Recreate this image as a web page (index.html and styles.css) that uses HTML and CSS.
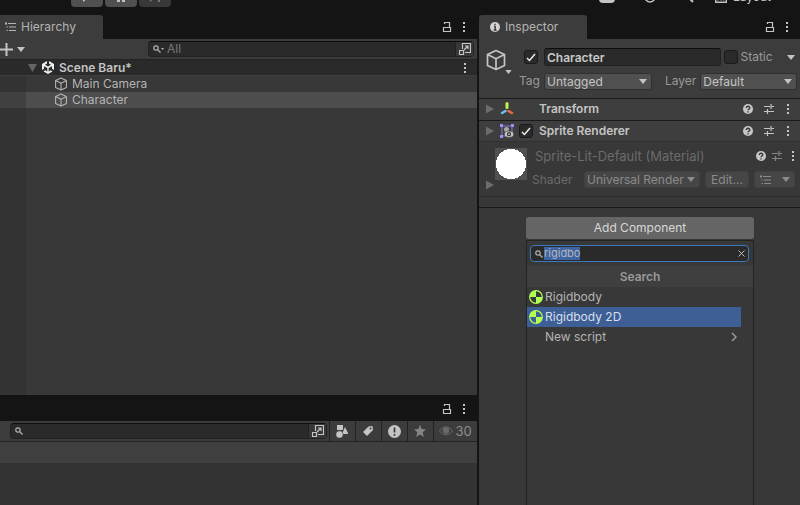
FILE: index.html
```html
<!DOCTYPE html>
<html lang="en">
<head>
<meta charset="utf-8">
<title>Scene Baru - Editor</title>
<link rel="stylesheet" href="styles.css">
</head>
<body>
<svg class="defs" aria-hidden="true">
  <symbol id="lock" viewBox="0 0 10 12"><path d="M1.500 6.500h7v4h-7z M2.500 3V1.500h5v5" fill="none" stroke="currentColor" stroke-width="1.200"/></symbol>
  <symbol id="dots" viewBox="0 0 4 12"><path d="M1 1h2v2H1zM1 5h2v2H1zM1 9h2v2H1z" fill="currentColor"/></symbol>
  <symbol id="down" viewBox="0 0 8 5"><path d="M0 0h8L4 5z" fill="currentColor"/></symbol>
  <symbol id="fold" viewBox="0 0 8 10"><path d="M0 .5v9L8 5z" fill="currentColor"/></symbol>
  <symbol id="list" viewBox="0 0 12 10"><path d="M3 1.500h8M4 5h7M4 8.500h7M0 1.500h2M1 0v3M1.500 5h1.300M1.500 8.500h1.300" fill="none" stroke="currentColor" stroke-width="1.100"/></symbol>
  <symbol id="mag" viewBox="0 0 8 8"><circle cx="3" cy="3" r="2.200" fill="none" stroke="currentColor" stroke-width="1.200"/><path d="M4.600 4.600L7.500 7.500" stroke="currentColor" stroke-width="1.300"/></symbol>
  <symbol id="pop" viewBox="0 0 12 12"><path d="M3.500 6V.5h8v9H6M.5 7.500h4v4h-4zM5 7l4-4M6 3h3v3" fill="none" stroke="currentColor" stroke-width="1.200"/></symbol>
  <symbol id="cube" viewBox="0 0 20 22"><path d="M10 1.500L18.500 5.500v11L10 20.500 1.500 16.500v-11zM1.500 5.500L10 9.800l8.500-4.300M10 9.800v10.700" fill="none" stroke="currentColor" stroke-width="1.700" stroke-linejoin="round"/></symbol>
  <symbol id="check" viewBox="0 0 10 9"><path d="M1 5l2.500 2.500L9 1" fill="none" stroke="#eee" stroke-width="1.500"/></symbol>
  <symbol id="help" viewBox="0 0 10 10"><circle cx="5" cy="5" r="5" fill="#c6c6c6"/><path d="M3.300 3.900c0-2.200 3.500-2.200 3.500 0C6.800 5.100 5 5 5 6.300M5 7.200v1.300" fill="none" stroke="#333" stroke-width="1.300"/></symbol>
  <symbol id="sliders" viewBox="0 0 10 10"><path d="M0 2.500h6M7 2.500h3M7 0v5M0 7.500h3M4 7.500h6M3.500 5v5" fill="none" stroke="currentColor" stroke-width="1.200"/></symbol>
  <symbol id="body" viewBox="0 0 14 14"><circle cx="7" cy="7" r="6.300" fill="none" stroke="#b0ff55" stroke-width="1.200"/><path d="M7 7V.7A6.300 6.300 0 0 0 .7 7zM7 7v6.300A6.300 6.300 0 0 0 13.300 7z" fill="#b0ff55"/></symbol>
</svg>

<header class="topbar">
  <div class="play">
    <button aria-label="Play"><svg width="10" height="12" viewBox="0 0 10 12"><path d="M1 0l8 6-8 6z" fill="currentColor"/></svg></button>
    <button aria-label="Pause"><svg width="8" height="12" viewBox="0 0 8 12"><path d="M0 0h3v12H0zM5 0h3v12H5z" fill="currentColor"/></svg></button>
    <button class="dim" aria-label="Step"><svg width="12" height="12" viewBox="0 0 12 12"><path d="M1 0l7 6-7 6zM9 0h2v12H9z" fill="currentColor"/></svg></button>
  </div>
  <div class="services">
    <svg width="16" height="12" viewBox="0 0 16 12"><path d="M4 4a4 4 0 0 1 8 0a4 4 0 0 1 0 8H4a4 4 0 0 1 0-8z" fill="currentColor"/></svg>
    <svg class="history" width="12" height="12" viewBox="0 0 12 12"><circle cx="6" cy="6" r="5" fill="none" stroke="currentColor" stroke-width="1.500"/></svg>
    <svg class="find" width="12" height="12" viewBox="0 0 12 12"><circle cx="4" cy="4" r="3" fill="none" stroke="currentColor" stroke-width="1.500"/><path d="M6 6l5 5" stroke="currentColor" stroke-width="2"/></svg>
    <svg width="12" height="12" viewBox="0 0 12 12"><path d="M.7.7h10.600v10.600H.7zM3 9.500V5M6 9.500V5M8.500 9.500V5" fill="none" stroke="currentColor" stroke-width="1.400"/></svg>
    <span>Layout</span>
  </div>
</header>

<main class="workspace">
  <div class="left">
    <section class="hierarchy">
      <div class="tabs">
        <div class="tab tab-hierarchy"><svg width="12" height="10"><use href="#list"/></svg>Hierarchy</div>
        <div class="tab-tools"><button aria-label="Lock"><svg width="10" height="12"><use href="#lock"/></svg></button><button aria-label="Menu"><svg width="4" height="12"><use href="#dots"/></svg></button></div>
      </div>
      <div class="toolbar">
        <button class="add" aria-label="Create"><svg width="13" height="13" viewBox="0 0 13 13"><path d="M6.500 0v13M0 6.500h13" stroke="currentColor" stroke-width="2"/></svg><svg width="8" height="5"><use href="#down"/></svg></button>
        <div class="search search-all">
          <svg width="8" height="8"><use href="#mag"/></svg><svg class="tiny" width="3" height="2" viewBox="0 0 8 5"><use href="#down"/></svg>
          <input type="text" aria-label="Search hierarchy" placeholder="All">
          <button class="pop" aria-label="Open search"><svg width="12" height="12"><use href="#pop"/></svg></button>
        </div>
      </div>
      <div class="scene">
        <svg class="arrow" width="9" height="8" viewBox="0 0 9 8"><path d="M0 0h9L4.500 8z" fill="currentColor"/></svg>
        <svg class="logo" width="12" height="13" viewBox="0 0 12 13"><path d="M5 0v2.500L3 3.700l3 1.700 3-1.700-2-1.200V0l5 3v6l-2-1.200V5.200L6.700 7v3.500l2-1.200L10.500 10.500 6 13 1.500 10.500l1.800-1.200 2 1.200V7L2 5.200v2.600L0 9V3z" fill="#eee"/></svg>
        <strong>Scene Baru*</strong>
        <button aria-label="Scene menu"><svg width="4" height="12"><use href="#dots"/></svg></button>
      </div>
      <ul class="tree">
        <li><svg width="14" height="14"><use href="#cube"/></svg>Main Camera</li>
        <li class="active"><svg width="14" height="14"><use href="#cube"/></svg>Character</li>
      </ul>
    </section>
    <section class="project">
      <div class="tabs">
        <div class="tab-tools"><button aria-label="Lock"><svg width="10" height="12"><use href="#lock"/></svg></button><button aria-label="Menu"><svg width="4" height="12"><use href="#dots"/></svg></button></div>
      </div>
      <div class="toolbar">
        <div class="search search-project">
          <svg width="8" height="8"><use href="#mag"/></svg>
          <input type="text" aria-label="Search project">
          <button class="pop" aria-label="Open search"><svg width="12" height="12"><use href="#pop"/></svg></button>
        </div>
        <button class="filter" aria-label="Filter by type"><svg width="12" height="13" viewBox="0 0 12 13"><path d="M1 0h6v5H1zM9 2l3.500 7H6z" fill="currentColor"/><circle cx="3.500" cy="9.500" r="3.700" fill="currentColor" stroke="#3c3c3c" stroke-width=".6"/></svg></button>
        <button class="filter" aria-label="Filter by label"><svg width="10" height="10" viewBox="0 0 10 10"><path d="M0 6L5.500.5 9.500 0 10 4 4 10z" fill="currentColor"/><circle cx="7.500" cy="2.500" r="1" fill="#3c3c3c"/></svg></button>
        <button class="filter" aria-label="Filter by log"><svg width="13" height="13" viewBox="0 0 13 13"><circle cx="6.500" cy="6.500" r="6.500" fill="currentColor"/><path d="M6.500 2.500v5M6.500 9v1.800" stroke="#333" stroke-width="1.600"/></svg></button>
        <button class="filter muted" aria-label="Favorites"><svg width="12" height="12" viewBox="0 0 12 12"><path d="M6 0l1.700 4.100L12 4.500 8.700 7.300 9.800 12 6 9.500 2.200 12l1.100-4.700L0 4.500l4.300-.4z" fill="currentColor"/></svg></button>
        <button class="filter count"><svg width="14" height="10" viewBox="0 0 14 10"><path d="M.5 5C4-.5 10-.5 13.500 5 10 10 4 10 .5 5z" fill="none" stroke="currentColor"/><circle cx="7" cy="4.500" r="3.200" fill="currentColor"/></svg>30</button>
      </div>
      <div class="crumbs"></div>
      <div class="assets"></div>
    </section>
  </div>

  <section class="inspector">
    <div class="tabs">
      <div class="tab tab-inspector"><svg width="10" height="10" viewBox="0 0 10 10"><circle cx="5" cy="5" r="5" fill="#d2d2d2"/><path d="M5 1.700v1.400M4 4.500h1.200V8M3.700 8h2.800" stroke="#333" stroke-width="1.300" fill="none"/></svg>Inspector</div>
      <div class="tab-tools"><button aria-label="Lock"><svg width="10" height="12"><use href="#lock"/></svg></button><button aria-label="Menu"><svg width="4" height="12"><use href="#dots"/></svg></button></div>
    </div>
    <div class="object">
      <button class="object-icon" aria-label="Object icon"><svg width="22" height="22"><use href="#cube"/></svg><svg class="corner" width="7" height="4" viewBox="0 0 8 5"><use href="#down"/></svg></button>
      <div class="object-fields">
        <div class="object-row">
          <label class="tick"><input type="checkbox" checked aria-label="Active"><svg width="10" height="9"><use href="#check"/></svg></label>
          <input class="name" type="text" aria-label="Name" value="Character">
          <label class="tick static"><input type="checkbox"><svg width="10" height="9"><use href="#check"/></svg><span>Static</span></label>
          <button class="more" aria-label="Static options"><svg width="8" height="5"><use href="#down"/></svg></button>
        </div>
        <div class="object-row tags">
          <label for="tag">Tag</label>
          <div class="drop tag"><select id="tag"><option>Untagged</option></select><svg width="8" height="5"><use href="#down"/></svg></div>
          <label class="layer" for="layer">Layer</label>
          <div class="drop"><select id="layer"><option>Default</option></select><svg width="8" height="5"><use href="#down"/></svg></div>
        </div>
      </div>
    </div>
    <div class="component">
      <svg class="fold" width="8" height="10"><use href="#fold"/></svg>
      <svg width="14" height="14" viewBox="0 0 14 14"><path d="M7 1.500v4" stroke="#bdf34b" stroke-width="3" stroke-linecap="round"/><path d="M5.500 9L2 11" stroke="#62c7f5" stroke-width="2.500" stroke-linecap="round"/><path d="M8.500 9L12 11" stroke="#f46743" stroke-width="2.500" stroke-linecap="round"/></svg>
      <span class="tick-space"></span>
      <strong>Transform</strong>
      <div class="component-tools"><button aria-label="Help"><svg width="10" height="10"><use href="#help"/></svg></button><button aria-label="Presets"><svg width="10" height="10"><use href="#sliders"/></svg></button><button aria-label="Menu"><svg width="4" height="12"><use href="#dots"/></svg></button></div>
    </div>
    <div class="component">
      <svg class="fold" width="8" height="10"><use href="#fold"/></svg>
      <svg width="14" height="14" viewBox="0 0 14 14"><path d="M2 2h10v10H2z" fill="none" stroke="#8d7ad8"/><path d="M0 0h3v3H0zM11 0h3v3h-3zM0 11h3v3H0z" fill="#a58cf5"/><circle cx="6.500" cy="5.500" r="2.500" fill="#aaa"/><ellipse cx="9" cy="10.200" rx="4.600" ry="3.200" fill="#c6c6c6" stroke="#3c3c3c" stroke-width=".6"/><circle cx="9" cy="10.200" r="1.500" fill="none" stroke="#333" stroke-width="1.200"/></svg>
      <label class="tick"><input type="checkbox" checked aria-label="Sprite Renderer enabled"><svg width="10" height="9"><use href="#check"/></svg></label>
      <strong>Sprite Renderer</strong>
      <div class="component-tools"><button aria-label="Help"><svg width="10" height="10"><use href="#help"/></svg></button><button aria-label="Presets"><svg width="10" height="10"><use href="#sliders"/></svg></button><button aria-label="Menu"><svg width="4" height="12"><use href="#dots"/></svg></button></div>
    </div>
    <div class="material">
      <svg class="fold" width="8" height="10"><use href="#fold"/></svg>
      <div class="preview"></div>
      <div class="material-main">
        <div class="material-title"><span>Sprite-Lit-Default (Material)</span>
          <div class="component-tools"><button aria-label="Help"><svg width="10" height="10"><use href="#help"/></svg></button><button class="muted" aria-label="Presets"><svg width="10" height="10"><use href="#sliders"/></svg></button><button aria-label="Menu"><svg width="4" height="12"><use href="#dots"/></svg></button></div>
        </div>
        <div class="shader">
          <label for="shader">Shader</label>
          <div class="drop"><select id="shader" disabled><option>Universal Render</option></select><svg width="8" height="5"><use href="#down"/></svg></div>
          <button disabled>Edit...</button>
          <button class="shader-list" disabled aria-label="Shader list"><svg width="12" height="10"><use href="#list"/></svg><svg width="8" height="5"><use href="#down"/></svg></button>
        </div>
      </div>
    </div>
    <div class="spacer"></div>
    <div class="picker">
      <button class="add-component">Add Component</button>
      <div class="popup">
        <div class="popup-search">
          <div class="field"><svg width="8" height="8"><use href="#mag"/></svg><div class="query" contenteditable="true" role="textbox" aria-label="Search components"><span>rigidbo</span></div><button aria-label="Clear"><svg width="7" height="7" viewBox="0 0 7 7"><path d="M.5.5l6 6M6.500.5l-6 6" stroke="currentColor"/></svg></button></div>
        </div>
        <h2>Search</h2>
        <ul>
          <li><svg width="14" height="14"><use href="#body"/></svg>Rigidbody</li>
          <li class="active"><svg width="14" height="14"><use href="#body"/></svg>Rigidbody 2D</li>
          <li><span class="no-icon"></span>New script<svg class="next" width="6" height="10" viewBox="0 0 6 10"><path d="M1 1l4 4-4 4" fill="none" stroke="#999" stroke-width="1.500"/></svg></li>
        </ul>
      </div>
    </div>
  </section>
</main>
</body>
</html>
```
FILE: styles.css
```css
* { box-sizing: border-box; }

body {
  margin: 0;
  height: 100vh;
  display: flex;
  flex-direction: column;
  overflow: hidden;
  background: #141414;
  color: #b4b4b4;
  font: 12px/16px Inter, "Liberation Sans", sans-serif;
}

button, input, select { font: inherit; color: inherit; }
button { display: flex; align-items: center; border: 0; padding: 0; background: none; color: #c4c4c4; }
input { border: 0; padding: 0; background: none; outline: none; }
ul { list-style: none; margin: 0; padding: 0; }
svg { display: block; flex: none; }
strong { font-weight: 600; color: #c4c4c4; }
.defs { position: absolute; width: 0; height: 0; }

/* Top bar, scrolled partly out of the window */
.topbar {
  height: 15px;
  flex: none;
  display: flex;
  justify-content: space-between;
  align-items: flex-end;
  padding: 0 29px 8px 71px;
}
.play { display: flex; gap: 2px; }
.play button {
  width: 32px;
  height: 22px;
  justify-content: center;
  background: #505050;
  color: #c4c4c4;
  border-radius: 0 0 4px 4px;
}
.play .dim { background: #383838; color: #777; }
.services { display: flex; align-items: center; padding-bottom: 2px; font-size: 12px; color: #c4c4c4; }
.services .history { margin-left: 29px; }
.services .find { margin: 0 21px 0 26px; }
.services span { margin-left: 6px; }

.workspace { flex: 1; min-height: 0; display: flex; gap: 2px; }
.left { flex: 477; min-width: 0; display: flex; flex-direction: column; }
.inspector { flex: 321; min-width: 0; background: #383838; display: flex; flex-direction: column; }

.tabs { height: 24px; flex: none; display: flex; justify-content: space-between; background: #141414; }
.tab { display: flex; align-items: center; background: #3c3c3c; border-radius: 0 3px 0 0; }
.tab-hierarchy { width: 103px; padding-left: 5px; gap: 4px; }
.tab-inspector { width: 108px; padding-left: 11px; gap: 5px; border-radius: 3px 3px 0 0; }
.tab-tools { display: flex; align-items: center; gap: 10px; margin-left: auto; padding-right: 11px; }

.toolbar { height: 21px; flex: none; display: flex; align-items: center; background: #3c3c3c; border-bottom: 1px solid #232323; }
.add { width: 26px; gap: 4px; }
.search {
  display: flex;
  align-items: center;
  height: 16px;
  background: #2a2a2a;
  border: 1px solid #212121;
  border-top-color: #0d0d0d;
  border-radius: 4px;
}
.search input { flex: 1; min-width: 0; height: 14px; }
.search input::placeholder { color: #777; opacity: 1; }
.pop { width: 18px; height: 14px; justify-content: center; background: #383838; border-left: 1px solid #212121; }
.search-all { flex: 1; margin: 0 3px 0 122px; padding-left: 4px; }
.tiny { margin-right: 3px; }
.search-project { flex: 1; margin: 0 2px 0 10px; padding-left: 4px; }

.hierarchy { flex: 380; display: flex; flex-direction: column; background: #383838; }
.scene { height: 16px; flex: none; display: flex; align-items: center; padding: 0 10px 0 28px; background: #2a2a2a; border-bottom: 1px solid #3e3e3e; }
.scene .arrow { color: #666; }
.logo { margin: 0 5px; }
.scene button { margin-left: auto; }
.tree { flex: 1; background: linear-gradient(to right, #333 26px, #383838 26px); }
.tree li { height: 16px; display: flex; align-items: center; gap: 4px; padding-left: 54px; }
.tree .active { background: linear-gradient(to right, #404040 26px, #4d4d4d 26px); }

.project { flex: 110; display: flex; flex-direction: column; }
.project .tabs { height: 26px; padding-top: 1px; }
.filter { width: 26px; height: 20px; justify-content: center; border-left: 1px solid #232323; }
.muted { color: #858585; }
.filter:not(.count) { padding-right: 1px; }
.count { width: 44px; gap: 2px; font-size: 13px; color: #8d8d8d; }
.count svg { color: #6a6a6a; }
.crumbs { height: 21px; background: #404040; }
.assets { flex: 1; background: #333; }

/* Inspector */
.object { height: 60px; flex: none; display: flex; background: #3c3c3c; border-bottom: 1px solid #1a1a1a; }
.object-icon { flex-direction: column; align-items: flex-start; width: 27px; margin: 10px 12px 0 6px; }
.corner { margin: -1px 0 0 20px; }
.object-fields { flex: 1; min-width: 0; padding-top: 9px; }
.object-row { height: 18px; display: flex; align-items: center; }
.tick { width: 14px; height: 14px; flex: none; display: flex; align-items: center; justify-content: center; background: #2a2a2a; border: 1px solid #1a1a1a; border-radius: 3px; }
.tick input { position: absolute; opacity: 0; margin: 0; }
.tick input:not(:checked) + svg { visibility: hidden; }
.name { flex: 1; min-width: 0; height: 18px; margin: 0 3px 0 6px; padding: 0 2px; background: #2a2a2a; border: 1px solid #212121; border-top-color: #0d0d0d; border-radius: 3px; font-weight: 600; color: #c8c8c8; }
.static span { margin-left: 41px; color: #9a9a9a; }
.more { margin: 0 5px 0 49px; }
.tags { margin: 6px 0 0 -5px; color: #999; }
.drop { flex: 1; min-width: 0; height: 17px; display: flex; align-items: center; padding-right: 4px; background: #505050; border: 1px solid #303030; border-radius: 3px; color: #c4c4c4; }
.drop select { flex: 1; min-width: 0; width: 0; height: 15px; padding: 0 2px; appearance: none; border: 0; background: none; opacity: 1; outline: none; }
.tags .drop { margin: 0 3px 0 4px; flex: 96; }
.tags .tag { margin: 0 0 0 4px; flex: 108; }
.layer { margin-left: 13px; }

.component { height: 22px; flex: none; display: flex; align-items: center; padding: 0 10px 1px 7px; background: #3e3e3e; border-bottom: 1px solid #1a1a1a; }
.component + .component { height: 21px; border-bottom-color: #303030; padding-bottom: 0; }
.component .fold { margin-right: 6px; }
.fold { color: #6c6c6c; }
.component .tick { margin-left: 5px; }
.tick-space { width: 19px; }
.component strong { margin-left: 6px; }
.component-tools { display: flex; align-items: center; gap: 10px; margin-left: auto; }
.component-tools button:last-child { margin-left: 2px; }
.component-tools button:first-child { margin-right: 1px; }

.material { height: 55px; flex: none; display: flex; padding: 6px 5px 0 7px; border-bottom: 1px solid #2c2c2c; color: #6b6b6b; }
.material .fold { align-self: flex-end; margin-bottom: 6px; }
.preview { width: 32px; height: 32px; margin-left: 1px; flex: none; background: radial-gradient(circle, #fff 15px, #505050 15px); }
.material-main { flex: 1; min-width: 0; padding-left: 5px; }
.material-title { display: flex; align-items: center; height: 16px; padding-left: 3px; font-size: 13px; }
.material-title .component-tools { gap: 5px; }
.material-title .component-tools button:last-child { margin-left: 4px; }
.shader { display: flex; align-items: center; height: 17px; margin-top: 7px; gap: 5px; }
.shader label { width: 47px; }
.shader .drop, .shader > button { height: 17px; background: #464646; border: 1px solid #404040; border-radius: 3px; color: #8b8b8b; }
.shader > button { width: 44px; justify-content: center; }
.shader .shader-list { width: 41px; gap: 10px; }
.spacer { height: 11px; flex: none; border-bottom: 1px solid #1a1a1a; }

/* Component picker */
.picker { flex: 1; display: flex; flex-direction: column; margin: 9px 46px 0 47px; }
.add-component { height: 22px; flex: none; justify-content: center; background: #656565; border-radius: 3px; color: #d8d8d8; }
.popup { flex: 1; margin-top: 1px; border: solid #232323; border-width: 1px 1px 0; }
.popup-search { height: 25px; padding: 4px 4px 0 3px; }
.field { height: 17px; display: flex; align-items: center; padding: 0 3px 0 4px; border: 1px solid #3a79bb; border-radius: 4px; background: #2a2a2a; }
.query { flex: 1; height: 15px; padding-left: 1px; font-size: 11px; line-height: 15px; outline: none; }
.query span { display: inline-block; height: 13px; line-height: 13px; background: #3d65a5; }
.popup h2 { height: 21px; margin: 0; background: #3f3f3f; text-align: center; font-size: 12px; line-height: 21px; font-weight: 600; color: #999; }
.popup li { height: 20px; display: flex; align-items: center; gap: 2px; margin-right: 12px; padding: 0 4px 0 2px; }
.popup .active { background: #3e5f96; color: #d8dfea; }
.no-icon { width: 14px; }
.next { margin-left: auto; }
```
